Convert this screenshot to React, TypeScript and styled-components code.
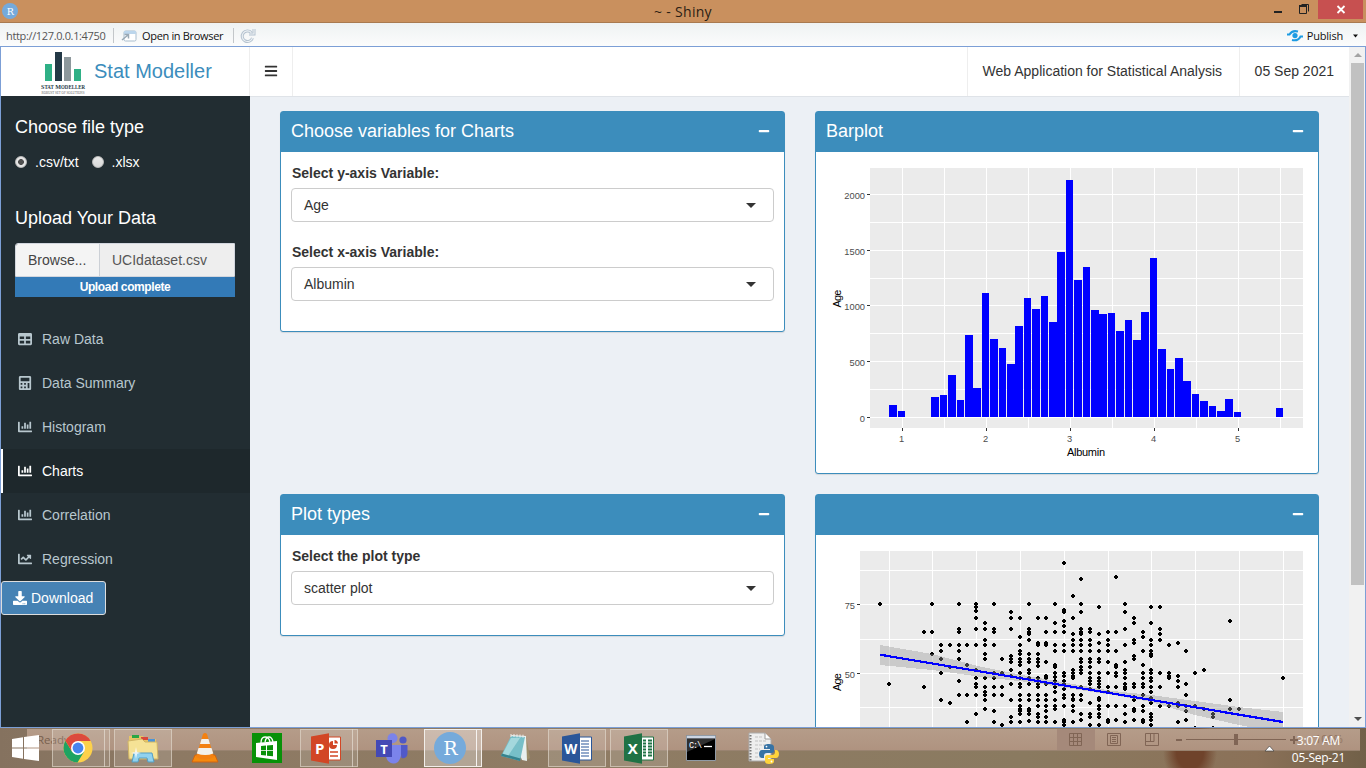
import React from "react";
import styled, { createGlobalStyle, css } from "styled-components";
import { FaBars, FaCalculator, FaChartBar, FaChartLine, FaDownload, FaMinus, FaTable } from "react-icons/fa";

const ui = `"Open Sans", "Noto Sans", sans-serif`;
const sans = `"Liberation Sans", Arial, sans-serif`;

const Global = createGlobalStyle`
  * { box-sizing: border-box; }
  body { margin: 0; overflow: hidden; font-family: ${sans}; font-size: 14px; color: #333; }
  svg { display: block; flex: none; }
`;

const Desktop = styled.div`
  width: 1366px;
  height: 768px;
  display: flex;
  flex-direction: column;
  overflow: hidden;
`;

/* ---------- window chrome ---------- */

const TitleBar = styled.div`
  position: relative;
  height: 23px;
  flex: none;
  display: flex;
  align-items: center;
  justify-content: center;
  background: #c9905e;
  border-bottom: 1px solid #a97a50;
  font: 14px/22px ${ui};
  color: #2a1d14;
`;

const TitleText = styled.span`
  font-size: 14px;
  letter-spacing: 0.3px;
  padding-top: 1px;
`;

const TitleIcon = styled.div`
  position: absolute;
  left: 2px;
  top: 3px;
`;

const WindowButtons = styled.div`
  position: absolute;
  right: 3px;
  top: 0;
  display: flex;
`;

const Toolbar = styled.div`
  height: 23px;
  flex: none;
  display: flex;
  align-items: center;
  padding: 2px 6px 0;
  background: linear-gradient(#eff2f3, #fbfcfc);
  font: 11.5px/18px ${ui};
  color: #111;
`;

const Address = styled.span`
  width: 107px;
  font-size: 11px;
  letter-spacing: -0.35px;
  color: #555;
`;

const Divider = styled.i`
  width: 1px;
  height: 15px;
  background: #c3c7ca;
`;

const OpenLabel = styled.span`
  width: 91px;
  margin-left: 5px;
  padding-top: 1px;
  font-size: 11px;
  letter-spacing: -0.33px;
`;

const Publish = styled.div`
  margin-left: auto;
  display: flex;
  align-items: center;
  gap: 4px;
  font-size: 11px;
  letter-spacing: -0.2px;
`;

/* ---------- application ---------- */

const Viewport = styled.div`
  height: 682px;
  flex: none;
  display: flex;
  border: 1px solid #7c9fd6;
  overflow: hidden;
`;

const Page = styled.div`
  flex: 1;
  display: flex;
  flex-direction: column;
  overflow: hidden;
`;

const Header = styled.header`
  height: 49px;
  flex: none;
  display: flex;
  background: #fff;
`;

const Brand = styled.div`
  width: 249px;
  display: flex;
  align-items: center;
  padding: 0 0 1px 39px;
  border-right: 1px solid #eee;
  font-size: 20px;
  color: #3c8dbc;
  gap: 7px;
`;

const Toggle = styled.div`
  width: 43px;
  display: flex;
  align-items: center;
  justify-content: center;
  padding-bottom: 2px;
  border-right: 1px solid #eee;
  color: #333;
`;

const HeaderItem = styled.div<{ $w?: number }>`
  width: ${(p) => (p.$w ? `${p.$w}px` : "auto")};
  white-space: nowrap;
  display: flex;
  align-items: center;
  padding: 0 15px 2px;
  border-left: 1px solid #eee;
`;

const Spacer = styled.div`
  flex: 1;
`;

const Columns = styled.div`
  flex: 1;
  display: flex;
  min-height: 0;
`;

const Sidebar = styled.aside`
  width: 249px;
  flex: none;
  background: #222d32;
  color: #fff;
`;

const Heading = styled.h4<{ $top: number }>`
  margin: 0;
  padding: ${(p) => p.$top}px 14px 0;
  font-size: 18px;
  font-weight: 400;
  line-height: 20px;
`;

const Radios = styled.div`
  display: flex;
  align-items: center;
  height: 20px;
  margin-top: 15px;
  padding-left: 14px;
`;

const Radio = styled.i<{ $on?: boolean }>`
  width: 12px;
  height: 12px;
  border-radius: 50%;
  border: 1px solid #bdbdbd;
  background: ${(p) =>
    p.$on ? "radial-gradient(circle, #505050 0 2.6px, #e6e6e6 3.2px)" : "linear-gradient(#e9e9e9, #d8d8d8)"};
`;

const RadioLabel = styled.span`
  margin: 0 13px 0 8px;
`;

const FileRow = styled.div`
  display: flex;
  height: 34px;
  margin: 15px 15px 0 14px;
  line-height: 32px;
  border: 1px solid #d2d6de;
  border-radius: 3px 0 0 0;
  overflow: hidden;
`;

const Browse = styled.div`
  width: 84px;
  padding-left: 12px;
  background: #f4f4f4;
  border-right: 1px solid #ccd0d6;
  color: #444;
`;

const FileName = styled.div`
  flex: 1;
  padding-left: 12px;
  background: #eee;
  color: #555;
`;

const Progress = styled.div`
  height: 20px;
  margin: 0 15px 20px 14px;
  background: #337ab7;
  text-align: center;
  font: bold 12px/20px ${sans};
  letter-spacing: -0.4px;
`;

const MenuItem = styled.div<{ $active?: boolean }>`
  height: 44px;
  display: flex;
  align-items: center;
  padding-left: 14px;
  border-left: 2px solid transparent;
  color: #b8c7ce;
  ${(p) =>
    p.$active &&
    css`
      background: #1e282c;
      border-left-color: #fff;
      color: #fff;
    `}
`;

const MenuIcon = styled.span`
  width: 25px;
  padding-left: 1px;
`;

const Download = styled.div`
  width: 105px;
  height: 34px;
  display: flex;
  align-items: center;
  gap: 4px;
  padding-left: 11px;
  background: #4682b4;
  border: 1px solid #ddd;
  border-radius: 3px;
`;

const Content = styled.main`
  flex: 1;
  background: #ecf0f5;
  display: grid;
  grid-template-columns: 505px 504px;
  grid-template-rows: 363px 363px;
  gap: 20px 30px;
  align-items: start;
  border-top: 1px solid #dfe3e8;
  padding: 14px 30px 0;
  overflow: hidden;
`;

const Box = styled.section<{ $h: number }>`
  height: ${(p) => p.$h}px;
  background: #fff;
  border: 1px solid #3c8dbc;
  border-radius: 3px;
  box-shadow: 0 1px 1px rgba(0, 0, 0, 0.1);
`;

const BoxHeader = styled.div`
  height: 40px;
  display: flex;
  align-items: center;
  justify-content: space-between;
  padding: 0 14px 2px 10px;
  background: #3c8dbc;
  color: #fff;
  font-size: 18px;
`;

const BoxBody = styled.div`
  padding: 11px 10px 0;
`;

const Field = styled.div`
  margin-bottom: 20px;
`;

const Label = styled.div`
  height: 20px;
  margin-bottom: 5px;
  padding-left: 1px;
  font-weight: 700;
  line-height: 20px;
`;

const Select = styled.div`
  height: 34px;
  display: flex;
  align-items: center;
  justify-content: space-between;
  padding: 0 17px 0 12px;
  border: 1px solid #ccc;
  border-radius: 4px;
`;

const Caret = styled.i`
  border: 5px solid transparent;
  border-top-color: #333;
  border-bottom: 0;
`;

const Scrollbar = styled.div`
  width: 16px;
  flex: none;
  display: flex;
  flex-direction: column;
  align-items: center;
  background: #f1f1f1;
  padding: 6px 0 6px 1px;
`;

const Thumb = styled.div`
  width: 13px;
  height: 522px;
  margin: 6px 0 auto;
  background: #c1c1c1;
`;

const Arrow = styled.i<{ $down?: boolean }>`
  border: 4px solid transparent;
  ${(p) => (p.$down ? "border-top-color:#505050;border-bottom:0;" : "border-bottom-color:#a3a3a3;border-top:0;")}
`;

/* ---------- taskbar ---------- */

const Taskbar = styled.footer`
  position: relative;
  flex: 1;
  display: flex;
  background:
    radial-gradient(ellipse 27px 34px at 1190px 24px, #6f432b 0 50%, transparent 100%),
    linear-gradient(90deg, #85725f, #8d7963 12%, #8f7c64 45%, #8a7a60 75%, #8b7158 92%, #716048);
`;

const StatusBar = styled.div`
  position: absolute;
  left: 27px;
  right: 6px;
  top: 1px;
  height: 22px;
  background: linear-gradient(#b59c89, #af9380);
  border-bottom: 1px solid #998370;
  font: 11.5px/22px ${ui};
  color: #79614f;
  padding-left: 10px;
`;

const StatusTools = styled.div`
  position: absolute;
  right: 0;
  top: 0;
`;

const Start = styled.div`
  position: relative;
  width: 50px;
  padding: 7px 0 0 12px;
`;

const Slot = styled.div<{ $open?: boolean; $focus?: boolean; $stack?: boolean }>`
  position: relative;
  width: 62px;
  display: flex;
  align-items: center;
  justify-content: center;
  padding-right: ${(p) => (p.$stack ? 6 : 0)}px;
  ${(p) =>
    p.$open &&
    css`
      &::before,
      &::after {
        content: "";
        position: absolute;
        top: 1px;
        bottom: 1px;
        left: 2px;
        right: ${p.$stack ? 7 : 2}px;
        border: 1px solid ${p.$focus ? "#f2eeea" : "rgba(225,215,203,.65)"};
        background: rgba(255, 255, 255, ${p.$focus ? 0.32 : 0.13});
      }
      &::after {
        display: ${p.$stack ? "block" : "none"};
        left: auto;
        right: 2px;
        width: 5px;
        border-left: 0;
      }
    `}
  svg {
    position: relative;
    z-index: 1;
  }
`;

const Clock = styled.div`
  position: absolute;
  right: 21px;
  top: 4px;
  text-align: right;
  font: 12px/17px ${ui};
  letter-spacing: -0.3px;
  color: #fff;
  & > span { display: block; }
  & > span:first-child { padding-right: 5px; }
`;

const TrayArrow = styled.div`
  position: absolute;
  left: 1264px;
  top: 17px;
`;

/* ---------- charts ---------- */

// [x, width, top] of every bar; all of them stand on the zero line
const bars: number[][] = [
  [889, 8, 405], [898, 7, 411], [931, 8, 397], [940, 7, 395], [948, 8, 375], [957, 7, 400], [965, 8, 335],
  [973, 8, 388], [982, 7, 293], [990, 8, 339], [999, 7, 348], [1007, 8, 364], [1015, 8, 326], [1024, 7, 298],
  [1032, 8, 309], [1041, 7, 296], [1049, 8, 322], [1057, 8, 252], [1066, 7, 180], [1074, 8, 280], [1083, 7, 267],
  [1091, 8, 310], [1099, 8, 314], [1108, 7, 313], [1116, 8, 331], [1125, 7, 320], [1133, 8, 340], [1141, 8, 312],
  [1150, 7, 258], [1158, 8, 349], [1167, 7, 369], [1175, 8, 358], [1183, 8, 381], [1192, 7, 394], [1200, 8, 401],
  [1209, 7, 406], [1217, 8, 411], [1225, 8, 399], [1234, 7, 412], [1276, 7, 408],
];

const Barplot = () => (
  <svg width="502" height="320" viewBox="816 152 502 320" fontFamily={sans}>
    <g shapeRendering="crispEdges">
      <rect x="870" y="168" width="433" height="260" fill="#ebebeb" />
      {[902, 944, 986, 1028, 1070, 1112, 1154, 1196, 1238, 1280].map((x) => (
        <rect key={x} x={x} y="168" width="1" height="260" fill="#fff" />
      ))}
      {[194, 222, 250, 278, 305, 333, 361, 389, 417].map((y) => (
        <rect key={y} x="870" y={y} width="433" height="1" fill="#fff" />
      ))}
      {bars.map(([x, w, t]) => (
        <rect key={x} x={x} y={t} width={w} height={417 - t} fill="#00f" />
      ))}
      {[194, 250, 305, 361, 417].map((y) => (
        <rect key={y} x="867" y={y} width="3" height="1" fill="#333" />
      ))}
      {[902, 986, 1070, 1154, 1238].map((x) => (
        <rect key={x} x={x} y="428" width="1" height="3" fill="#333" />
      ))}
    </g>
    <g fontSize="9.3" fill="#4d4d4d">
      {[["2000", 194], ["1500", 250], ["1000", 305], ["500", 361], ["0", 417]].map(([t, y]) => (
        <text key={t} x="865" y={Number(y) + 4.5} textAnchor="end">{t}</text>
      ))}
      {[902, 986, 1070, 1154, 1238].map((x, i) => (
        <text key={x} x={x - 0.5} y="442" textAnchor="middle">{i + 1}</text>
      ))}
    </g>
    <g fontSize="11" fill="#000" textAnchor="middle">
      <text x="1086" y="456" textLength="38">Albumin</text>
      <text transform="translate(841 298.500) rotate(-90)" textLength="18">Age</text>
    </g>
  </svg>
);

// each column of observations: x, then offsets below the panel's top in thirds of a pixel
const points: [number, number[]][] = [
  [880, [192]],
  [889, [432]],
  [924, [276, 441]],
  [932, [192, 276, 342]],
  [941, [315, 333, 357, 399, 480]],
  [950, [315, 381, 489]],
  [959, [192, 267, 276, 315, 333, 357, 423, 465]],
  [967, [315, 375, 465, 546]],
  [976, [192, 201, 213, 234, 267, 315, 390, 414, 432, 441, 465, 522]],
  [985, [249, 267, 300, 315, 342, 357, 414, 441, 456, 465, 480, 507]],
  [994, [192, 267, 276, 315, 399, 414, 441, 465, 513, 546]],
  [1002, [357, 399, 441, 465, 555]],
  [1011, [216, 234, 267, 348, 357, 366, 390, 408, 432, 480, 531, 546]],
  [1020, [234, 291, 315, 333, 342, 357, 366, 375, 399, 414, 432, 441, 465, 480, 498, 507, 513, 522, 546]],
  [1029, [192, 267, 276, 282, 300, 342, 357, 366, 390, 399, 414, 432, 465, 480, 507, 513, 522, 543]],
  [1038, [234, 309, 315, 342, 357, 366, 378, 414, 432, 441, 465, 480, 498, 522, 531, 546]],
  [1046, [234, 276, 309, 315, 366, 408, 414, 432, 465, 480, 498, 513, 531, 546]],
  [1055, [192, 249, 276, 315, 333, 375, 381, 399, 411, 423, 441, 456, 480, 498, 507, 546]],
  [1064, [69, 210, 216, 243, 258, 276, 315, 333, 399, 408, 423, 432, 447, 465, 474, 498, 540, 546, 555]],
  [1073, [168, 234, 282, 300, 315, 333, 390, 399, 408, 414, 465, 477, 480, 498, 513, 546]],
  [1081, [117, 192, 216, 267, 276, 282, 300, 315, 333, 357, 366, 381, 390, 399, 441, 465, 480, 522, 540]],
  [1090, [267, 276, 300, 315, 333, 357, 366, 381, 399, 414, 423, 432, 447, 489, 522, 531, 555]],
  [1099, [201, 282, 309, 333, 357, 366, 399, 414, 423, 432, 441, 474, 480, 498, 507, 522, 531, 555]],
  [1108, [276, 300, 315, 333, 366, 399, 441, 456, 498, 540, 546]],
  [1116, [111, 276, 333, 375, 381, 399, 408, 441, 498, 540]],
  [1125, [192, 216, 267, 315, 366, 390, 399, 414, 432, 441, 447, 498, 522, 546]],
  [1134, [234, 249, 300, 309, 348, 357, 432, 441, 471, 480, 507, 513, 540]],
  [1143, [276, 291, 333, 375, 399, 414, 432, 441, 465, 498, 513, 540, 546]],
  [1151, [201, 249, 300, 315, 333, 342, 348, 390, 399, 414, 423, 441, 456, 474, 480, 489, 522, 531, 540, 555]],
  [1160, [201, 267, 282, 300, 399, 441, 498]],
  [1169, [315, 399, 408, 414, 498]],
  [1178, [309, 408, 423, 441, 489, 498, 546]],
  [1186, [333, 432, 465, 498, 513, 540]],
  [1195, [399, 498, 564]],
  [1204, [390, 507]],
  [1213, [522, 531, 564]],
  [1230, [243, 480, 507]],
  [1239, [507]],
  [1283, [414]],
];

const Scatter = () => (
  <svg width="502" height="320" viewBox="816 535 502 320" fontFamily={sans}>
    <g shapeRendering="crispEdges">
      <rect x="860" y="551" width="443" height="270" fill="#ebebeb" />
      {[889, 932, 976, 1020, 1064, 1108, 1151, 1195, 1239, 1283].map((x) => (
        <rect key={x} x={x} y="551" width="1" height="270" fill="#fff" />
      ))}
      {[570, 604, 639, 673, 707].map((y) => (
        <rect key={y} x="860" y={y} width="443" height="1" fill="#fff" />
      ))}
      {[604, 673].map((y) => (
        <rect key={y} x="857" y={y} width="3" height="1" fill="#333" />
      ))}
      {points.map(([x, ys]) =>
        ys.map((v) => {
          const y = 540 + v / 3;
          return <path key={`${x}-${v}`} d={`M${x - 1} ${y - 2}h2v1h1v2h-1v1h-2v-1h-1v-2h1z`} fill="#000" />;
        })
      )}
      <path
        d="M880 645L932 654L982 667L1028 676L1073 684L1113 691L1151 695L1195 701L1239 707L1283 712V733L1239 725L1195 715L1151 702L1113 695L1073 689L1028 682L982 677L932 670L880 665Z"
        fill="#999"
        fillOpacity=".4"
      />
      <path d="M880 654.7L1283 722" stroke="#00f" strokeWidth="2.200" />
    </g>
    <g fontSize="9.3" fill="#4d4d4d" textAnchor="end">
      <text x="855" y="608.5">75</text>
      <text x="855" y="677.5">50</text>
    </g>
    <text transform="translate(841 682) rotate(-90)" fontSize="11" textAnchor="middle" textLength="18">Age</text>
  </svg>
);

/* ---------- drawings ---------- */

const RBadge = ({ size }: { size: number }) => (
  <svg width={size} height={size} viewBox="0 0 32 32">
    <circle cx="16" cy="16" r="16" fill="#75aadb" />
    <text x="16.5" y="23" textAnchor="middle" fontFamily="DejaVu Serif, serif" fontSize="19" fill="#fff">R</text>
  </svg>
);

const Logo = () => (
  <svg width="47" height="48" viewBox="40 47 47 48">
    <path d="M45 64h7v17h-7zM74 69h7v12h-7z" fill="#2fb086" />
    <path d="M55 52h7v29h-7z" fill="#243946" />
    <path d="M64 57h7v24h-7z" fill="#8d989c" />
    <g fontFamily="Liberation Serif, serif" textAnchor="middle">
      <text x="63" y="88.700" fontWeight="bold" fontSize="7" fill="#243946" textLength="44" lengthAdjust="spacingAndGlyphs">
        S<tspan fontSize="5.6">TAT</tspan> M<tspan fontSize="5.6">ODELLER</tspan>
      </text>
      <text x="63" y="93.5" fontSize="3.6" fill="#666" textLength="43" lengthAdjust="spacingAndGlyphs">ROBUST SET OF SOLUTIONS</text>
    </g>
  </svg>
);

const Chrome = () => (
  <svg width="30" height="30" viewBox="0 0 30 30">
    <circle cx="15" cy="15" r="14.5" fill="#fdd14b" />
    <path d="M15 15L2.4 7.8A14.5 14.5 0 0 1 27.7 8H15z" fill="#dc4a3d" />
    <path d="M2.4 7.8A14.5 14.5 0 0 0 14.5 29.5L21.2 18.5L15 15L9 18.5z" fill="#1ea362" />
    <path d="M2.4 7.8L9 18.5L11 9z" fill="#dc4a3d" />
    <circle cx="15" cy="15" r="7" fill="#fff" />
    <circle cx="15" cy="15" r="5.4" fill="#4684ee" />
  </svg>
);

const Explorer = () => (
  <svg width="32" height="30" viewBox="0 0 32 30">
    <path d="M2 3h14l2 3h11v19H2z" fill="#e6c566" />
    <path d="M5 2h7v3H5z" fill="#29a645" />
    <path d="M14 4h7v3h-7z" fill="#d8473b" />
    <path d="M21 6h7v3h-7z" fill="#4b94d8" />
    <path d="M1 8l14-2 3 3h12l1 17H2z" fill="#f5e295" stroke="#d1b565" />
    <path d="M5 29l2-9h18l2 9h-6l-1-4h-8l-1 4z" fill="#91d2ee" stroke="#549fc4" />
    <path d="M9 14l1 5 4 1-4 1-1 5-1-5-4-1 4-1z" fill="#fff" opacity=".8" />
  </svg>
);

const Vlc = () => (
  <svg width="28" height="30" viewBox="0 0 28 30">
    <path d="M4 22h20l3 7H1z" fill="#f58a0e" stroke="#cf6410" />
    <path d="M12 1q2-2 4 0l7 23q-9 5-18 0z" fill="#f38112" />
    <path d="M10.5 6h7l1.5 5H9zM7.5 15h13l1.8 5.5q-8 3-16.5 0z" fill="#f3f1ec" />
  </svg>
);

const Store = () => (
  <svg width="30" height="30" viewBox="0 0 30 30">
    <path d="M0 0h30v30H0z" fill="#089108" />
    <path d="M4 10l21-2v19L4 24z" fill="#fff" />
    <path d="M9 10q0-6 4-6t5 5M13 9q1-5 4-5t4 5" fill="none" stroke="#fff" strokeWidth="1.3" />
    <path d="M9 13l5-.4v4.6H9zM15 12.5l6-.6v5.3h-6zM9 18h5v4.6L9 22zM15 18h6v5.3l-6-.6z" fill="#089108" />
  </svg>
);

const Office = ({ letter, color, kind }: { letter: string; color: string; kind: "p" | "w" | "x" }) => (
  <svg width="30" height="31" viewBox="0 0 30 31">
    <path d="M17 4h12.5v23H17z" fill="#fff" stroke={color} />
    {kind === "w" && <path d="M19 8h8M19 11h8M19 14h8M19 17h8M19 20h8M19 23h8" stroke={color} strokeWidth="1.2" />}
    {kind === "x" && (
      <path d="M19 7.5h3M24 7.5h4M19 10.5h3M24 10.5h4M19 13.5h3M24 13.5h4M19 16.5h3M24 16.5h4M19 19.5h3M24 19.5h4M19 22.5h3M24 22.5h4" stroke={color} strokeWidth="2" />
    )}
    {kind === "p" && (
      <>
        <path d="M22 8a4 4 0 1 0 4 4h-4zM23.5 7v3.5H27A4 4 0 0 0 23.5 7z" fill={color} />
        <path d="M19 19h8M19 23h8" stroke={color} strokeWidth="1.5" />
      </>
    )}
    <path d="M0 3.5L18 .3v30.4L0 27.5z" fill={color} />
    <text x="8.8" y="20.500" textAnchor="middle" fontFamily={ui} fontWeight="bold" fontSize={kind === "w" ? 13.5 : 15} fill="#fff">{letter}</text>
  </svg>
);

const Teams = () => (
  <svg width="33" height="31" viewBox="0 0 33 31">
    <circle cx="28" cy="7" r="3.6" fill="#4f58c6" />
    <path d="M25 12h7.5v8q0 6-6 5z" fill="#5059c9" />
    <circle cx="17.5" cy="5.3" r="5" fill="#7b83eb" />
    <path d="M11 12h15v11q-2 8-8 7.5T11 23z" fill="#7b83eb" />
    <path d="M1 7h16v17H1z" fill="#4449b5" />
    <text x="9" y="20.5" textAnchor="middle" fontFamily={ui} fontWeight="bold" fontSize="13" fill="#fff">T</text>
  </svg>
);

const Notepad = () => (
  <svg width="32" height="30" viewBox="0 0 32 30">
    <path d="M27 3l4 22-5 3z" fill="#9d8d69" />
    <path d="M12 2l15 1 1 25-5-1z" fill="#e9f0ef" />
    <path d="M12 3l14 1-5 24L2 23z" fill="#77bfc8" />
    <path d="M12 5l9 0-12 18-6-1z" fill="#b8e2e5" opacity=".7" />
    <path d="M2 23l19 5 .5-2.500L3 20.500z" fill="#35838f" />
    <path d="M12 1v3M15 1v3M18 1.3v3M21 1.5v3M24 1.7v3" stroke="#eee" />
  </svg>
);

const Cmd = () => (
  <svg width="30" height="26" viewBox="0 0 30 26">
    <path d="M.5.5h29v25H.5z" fill="#000" stroke="#919ba6" />
    <path d="M1 1h28v2.5H1z" fill="#ccd5e2" />
    <path d="M1 4h28L1 17z" fill="#303030" />
    <text x="3" y="12.500" fontFamily="Liberation Mono, monospace" fontSize="8.500" fill="#fff" textLength="13">C:\</text>
    <path d="M18 11.500h8" stroke="#fff" strokeWidth="1.3" />
  </svg>
);

const PythonFile = () => (
  <svg width="32" height="32" viewBox="0 0 32 32">
    <path d="M2 1h16l6 6v22H2z" fill="#eee" stroke="#aaa" />
    <path d="M3.5 3v26" stroke="#777" strokeDasharray="1.5 1.5" strokeWidth="2" />
    <path d="M8 5h8M8 9h12M8 13h10M8 17h5M8 21h4M8 25h5" stroke="#c1c1c1" strokeDasharray="3 1" />
    <path d="M18 1v6h6" fill="#fff" stroke="#999" />
    <path d="M22 12c-4 0-5 1-5 3v2h6v1h-8c-2 0-3 2-3 4s1 4 3 4h2v-2c0-2 1-3 3-3h5c1 0 2-1 2-2v-4c0-2-2-3-5-3z" fill="#3773a5" />
    <path d="M22 32c4 0 5-1 5-3v-2h-6v-1h8c2 0 3-2 3-4s-1-4-3-4h-1v2c0 2-1 3-3 3h-5c-1 0-2 1-2 2v4c0 2 1 3 4 3z" fill="#ffd43b" />
    <circle cx="19.5" cy="14.6" r=".9" fill="#fff" />
    <circle cx="24.5" cy="29.5" r=".9" fill="#fff" />
  </svg>
);

const StatusIcons = () => (
  <svg width="304" height="21" viewBox="1056 729 304 21" fill="none" stroke="#806555">
    <path d="M1057 729h38v21h-38z" fill="#a5897a" stroke="none" />
    <path d="M1069.5 733.5h12v12h-12zM1073.5 733.5v12M1077.5 733.5v12M1069.5 737.5h12M1069.5 741.5h12" />
    <path d="M1107.5 733.5h13v12h-13zM1110.5 735.5h7v8h-7zM1112 737.5h4M1112 739.5h4M1112 741.5h4" />
    <path d="M1145.5 733.5h13v12h-13zM1145.5 741.5h8.5v-8M1150.5 733.5v8" />
    <path d="M1176 740h6M1290 740h8M1294 736v8" strokeWidth="2" />
    <path d="M1186 739.5h100" />
    <path d="M1234 734h4v11h-4z" fill="#806555" stroke="none" />
    <text x="1315" y="743" fontFamily={ui} fontSize="11" fill="#907360" stroke="none">100%</text>
  </svg>
);

const menu = [
  { label: "Raw Data", Icon: FaTable },
  { label: "Data Summary", Icon: FaCalculator },
  { label: "Histogram", Icon: FaChartBar },
  { label: "Charts", Icon: FaChartBar, active: true },
  { label: "Correlation", Icon: FaChartBar },
  { label: "Regression", Icon: FaChartLine },
];

const SelectField = ({ label, value }: { label: string; value: string }) => (
  <Field>
    <Label>{label}</Label>
    <Select>
      {value}
      <Caret />
    </Select>
  </Field>
);

const Card = ({ title, h, children }: { title?: string; h: number; children: React.ReactNode }) => (
  <Box $h={h}>
    <BoxHeader>
      <span>{title}</span>
      <FaMinus size={12} />
    </BoxHeader>
    {children}
  </Box>
);

export default function App() {
  return (
    <Desktop>
      <Global />
      <TitleBar>
        <TitleIcon><RBadge size={16} /></TitleIcon>
        <TitleText>~ - Shiny</TitleText>
        <WindowButtons>
          <svg width="100" height="19" viewBox="1263 0 100 19">
            <path d="M1274 11h8v2h-8z" fill="#222" />
            <path d="M1299.5 6.5h7v7h-7zM1301.5 4.5h7v7" fill="none" stroke="#222" />
            <path d="M1299 6h8" stroke="#222" strokeWidth="2" />
            <path d="M1318 0h45v19h-45z" fill="#c75050" />
            <path d="M1337.5 6l7 7M1344.5 6l-7 7" stroke="#fff" strokeWidth="1.8" />
          </svg>
        </WindowButtons>
      </TitleBar>
      <Toolbar>
        <Address>http://127.0.0.1:4750</Address>
        <Divider />
        <svg width="23" height="16" viewBox="114 28 23 16">
          <rect x="124" y="31" width="12" height="10" rx="1.5" fill="#fff" stroke="#a9bdcd" />
          <path d="M124 31h12v3h-12z" fill="#bcd6ec" />
          <path d="M122 40l6-5M124.5 34.5h4v4" fill="none" stroke="#9aa9b5" strokeWidth="1.5" />
        </svg>
        <OpenLabel>Open in Browser</OpenLabel>
        <Divider />
        <svg width="24" height="18" viewBox="234 26 24 18" fill="none">
          <path d="M251.300 31.500a5.300 5.300 0 1 0 1.200 5.500M254 28v5h-5" stroke="#b4c2cf" strokeWidth="3" />
          <path d="M251.300 31.500a5.300 5.300 0 1 0 1.200 5.500M254 28v5h-5" stroke="#eef2f5" strokeWidth="1.1" />
        </svg>
        <Publish>
          <svg width="16" height="14" viewBox="0 0 16 14" fill="none" stroke="#1d9be2" strokeWidth="2">
            <path d="M0 5.5h2.5Q5 1 11 2.5M16 7.5h-2.5Q11 12.500 5 11" />
            <circle cx="8" cy="6.600" r="2.600" fill="#1d9be2" stroke="none" />
          </svg>
          Publish
          <svg width="13" height="6" viewBox="0 0 13 6"><path d="M6 1.500h5L8.500 4.500z" fill="#111" /></svg>
        </Publish>
      </Toolbar>

      <Viewport>
        <Page>
          <Header>
            <Brand><Logo />Stat Modeller</Brand>
            <Toggle><FaBars size={14} /></Toggle>
            <Spacer />
            <HeaderItem $w={272}>Web Application for Statistical Analysis</HeaderItem>
            <HeaderItem>05 Sep 2021</HeaderItem>
          </Header>
          <Columns>
            <Sidebar>
              <Heading $top={21}>Choose file type</Heading>
              <Radios>
                <Radio $on />
                <RadioLabel>.csv/txt</RadioLabel>
                <Radio />
                <RadioLabel>.xlsx</RadioLabel>
              </Radios>
              <Heading $top={36}>Upload Your Data</Heading>
              <FileRow>
                <Browse>Browse...</Browse>
                <FileName>UCIdataset.csv</FileName>
              </FileRow>
              <Progress>Upload complete</Progress>
              {menu.map(({ label, Icon, active }) => (
                <MenuItem key={label} $active={active}>
                  <MenuIcon><Icon size={14} /></MenuIcon>
                  {label}
                </MenuItem>
              ))}
              <Download><FaDownload size={14} />Download</Download>
            </Sidebar>
            <Content>
              <Card title="Choose variables for Charts" h={221}>
                <BoxBody>
                  <SelectField label="Select y-axis Variable:" value="Age" />
                  <SelectField label="Select x-axis Variable:" value="Albumin" />
                </BoxBody>
              </Card>
              <Card title="Barplot" h={363}><Barplot /></Card>
              <Card title="Plot types" h={142}>
                <BoxBody>
                  <SelectField label="Select the plot type" value="scatter plot" />
                </BoxBody>
              </Card>
              <Card h={363}><Scatter /></Card>
            </Content>
          </Columns>
        </Page>
        <Scrollbar>
          <Arrow />
          <Thumb />
          <Arrow $down />
        </Scrollbar>
      </Viewport>

      <Taskbar>
        <StatusBar>
          Ready
          <StatusTools><StatusIcons /></StatusTools>
        </StatusBar>
        <Start>
          <svg width="27" height="26" viewBox="0 0 27 26" fill="#fff">
            <path d="M0 4l11-1.700V12.500H0zM12 2.100L27 0v12.500H12zM0 13.500h11v10.200L0 22zM12 13.500h15V26l-15-2.100z" />
          </svg>
        </Start>
        <Slot $open $stack><Chrome /></Slot>
        <Slot $open><Explorer /></Slot>
        <Slot><Vlc /></Slot>
        <Slot><Store /></Slot>
        <Slot $open $stack><Office letter="P" color="#d24625" kind="p" /></Slot>
        <Slot><Teams /></Slot>
        <Slot $open $focus $stack><RBadge size={32} /></Slot>
        <Slot><Notepad /></Slot>
        <Slot $open><Office letter="W" color="#2a5699" kind="w" /></Slot>
        <Slot $open><Office letter="X" color="#207245" kind="x" /></Slot>
        <Slot><Cmd /></Slot>
        <Slot><PythonFile /></Slot>
        <TrayArrow>
          <svg width="11" height="7" viewBox="0 0 11 7"><path d="M1 6L5.500 1L10 6z" fill="#fff" stroke="#444" strokeWidth=".7" /></svg>
        </TrayArrow>
        <Clock>
          <span>3:07 AM</span>
          <span>05-Sep-21</span>
        </Clock>
      </Taskbar>
    </Desktop>
  );
}
